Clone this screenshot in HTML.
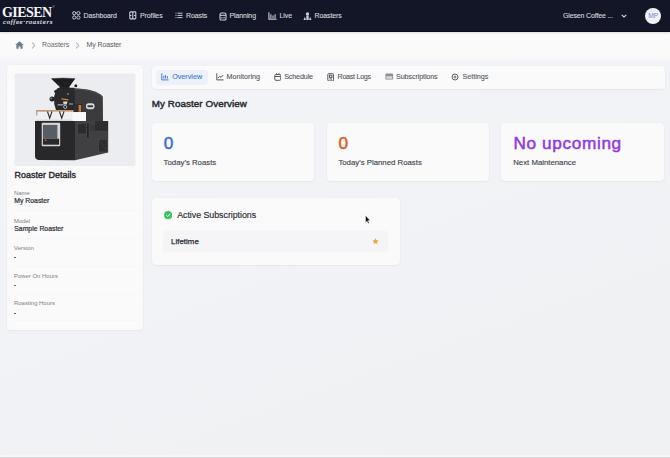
<!DOCTYPE html>
<html><head><meta charset="utf-8">
<style>
*{box-sizing:border-box;margin:0;padding:0}
html,body{width:670px;height:458px;overflow:hidden}
body{font-family:"Liberation Sans",sans-serif;background:linear-gradient(160deg,#f3f4f7 0%,#f2f3f6 45%,#eff0f2 100%);position:relative;color:#2a2d34}
.abs{position:absolute;white-space:nowrap;line-height:1}
#hdr{position:absolute;left:0;top:0;width:670px;height:32px;background:#121626;border-bottom:1px solid #0c0f19;box-shadow:0 1px 2px rgba(0,0,0,0.12);z-index:2}
.nv{position:absolute;top:11.5px;color:#d3d5dc;font-size:7px;line-height:1;white-space:nowrap;letter-spacing:-0.1px;-webkit-text-stroke:0.12px #d3d5dc}
.ic{position:absolute}
.card{position:absolute;background:#fafafb;border-radius:4px;box-shadow:0 0 2px rgba(0,0,0,0.05),0 1px 2px rgba(0,0,0,0.04)}
.lbl{position:absolute;left:14px;font-size:5.95px;color:#7d7f85;white-space:nowrap;line-height:1}
.val{position:absolute;left:14.3px;font-size:6.85px;color:#2a2d34;white-space:nowrap;line-height:1;-webkit-text-stroke:0.2px #2a2d34}
.dash{position:absolute;left:14.3px;width:2px;height:1px;background:#6a6c72}
.sep{position:absolute;left:13px;width:124px;height:1px;background:#f6f6f8}
.tab{position:absolute;top:73.3px;font-size:7.2px;color:#55575d;-webkit-text-stroke:0.1px currentColor;white-space:nowrap;line-height:1}
.stat-num{position:absolute;font-size:17.2px;white-space:nowrap;line-height:1;-webkit-text-stroke:0.5px currentColor}
.stat-lbl{position:absolute;font-size:7.8px;color:#45474e;-webkit-text-stroke:0.15px #45474e;white-space:nowrap;line-height:1}
</style></head>
<body>
<div id="hdr">
  <div class="abs" style="left:2px;top:6px;font-family:'Liberation Serif',serif;font-weight:bold;color:#f4f4f6;font-size:14px;letter-spacing:-0.55px;line-height:14px">GIESEN</div>
  <div class="abs" style="left:52.5px;top:5.5px;color:#ccc;font-size:3px">®</div>
  <div class="abs" style="left:3px;top:18.8px;font-family:'Liberation Serif',serif;font-style:italic;color:#ececf0;font-size:6.6px;letter-spacing:0.75px;line-height:6.6px;-webkit-text-stroke:0.15px #ececf0">coffee·roasters</div>

  <svg class="ic" style="left:72px;top:11px" width="9" height="9" viewBox="0 0 9 9" fill="none" stroke="#c9ccd6" stroke-width="1"><circle cx="2.2" cy="2.2" r="1.6"/><circle cx="6.4" cy="2.2" r="1.6"/><circle cx="2.2" cy="6.5" r="1.6"/><circle cx="6.4" cy="6.5" r="1.6"/></svg>
  <div class="nv" style="left:83.5px">Dashboard</div>

  <svg class="ic" style="left:129px;top:11px" width="8" height="9" viewBox="0 0 8 9" fill="none" stroke="#c9ccd6" stroke-width="1.1"><rect x="0.8" y="0.9" width="6" height="7" rx="0.6"/><line x1="3.8" y1="1" x2="3.8" y2="8"/><line x1="1" y1="4.5" x2="2.5" y2="4.5"/><line x1="5" y1="4.5" x2="6.6" y2="4.5"/></svg>
  <div class="nv" style="left:140px">Profiles</div>

  <svg class="ic" style="left:174.5px;top:12px" width="8" height="8" viewBox="0 0 8 8" fill="none" stroke="#c9ccd6" stroke-width="1"><line x1="0.5" y1="1.2" x2="1.5" y2="1.2"/><line x1="2.5" y1="1.2" x2="7.5" y2="1.2"/><line x1="0.5" y1="3.4" x2="1.5" y2="3.4"/><line x1="2.5" y1="3.4" x2="7.5" y2="3.4"/><line x1="0.5" y1="5.6" x2="1.5" y2="5.6"/><line x1="2.5" y1="5.6" x2="7.5" y2="5.6"/></svg>
  <div class="nv" style="left:186px">Roasts</div>

  <svg class="ic" style="left:218.5px;top:11.5px" width="8" height="9" viewBox="0 0 8 9" fill="none" stroke="#c9ccd6" stroke-width="1.1"><path d="M1,2.5 Q1,1 2.5,1 L5.5,1 Q7,1 7,2.5 L7,7 Q7,8 6,8 L2,8 Q1,8 1,7 Z"/><line x1="1" y1="3.3" x2="7" y2="3.3"/><line x1="2.9" y1="5" x2="2.9" y2="6.5"/><line x1="5.1" y1="5" x2="5.1" y2="6.5"/></svg>
  <div class="nv" style="left:229.5px">Planning</div>

  <svg class="ic" style="left:267.5px;top:12px" width="9" height="8" viewBox="0 0 9 8" fill="none" stroke="#c9ccd6" stroke-width="1.1"><path d="M0.9,0.3 L0.9,7.1 L8.5,7.1"/><line x1="2.9" y1="2.2" x2="2.9" y2="6"/><line x1="5" y1="3.6" x2="5" y2="6"/><line x1="7.1" y1="2.2" x2="7.1" y2="6"/></svg>
  <div class="nv" style="left:279.5px">Live</div>

  <svg class="ic" style="left:302.5px;top:11.5px" width="9" height="8.5" viewBox="0 0 9 8.5" fill="#c9ccd6"><circle cx="4.5" cy="2" r="1.7"/><rect x="3.3" y="3.6" width="2.4" height="4.6"/><path d="M0.4,8.2 L1.9,4.8 L3,8.2 Z"/><path d="M6,8.2 L7.1,4.8 L8.6,8.2 Z"/></svg>
  <div class="nv" style="left:314.5px">Roasters</div>

  <div class="nv" style="left:563px;top:12px;letter-spacing:-0.15px">Giesen Coffee ...</div>
  <svg class="ic" style="left:621px;top:13.5px" width="6" height="4" viewBox="0 0 6 4" fill="none" stroke="#d3d5dc" stroke-width="1.1"><path d="M0.7,0.8 L3,3 L5.3,0.8"/></svg>
  <div class="abs" style="left:645.3px;top:7.8px;width:16px;height:16px;border-radius:50%;background:#f0f1f9;color:#7482d4;font-size:6.6px;line-height:16.4px;text-align:center">MP</div>
</div>

<!-- breadcrumb bar -->
<div class="abs" style="left:0;top:32px;width:670px;height:30px;background:linear-gradient(180deg,#fbfbfc 0%,#fafafb 78%,#f3f4f6 100%)"></div>
<svg class="ic" style="left:14.5px;top:41px" width="9" height="8" viewBox="0 0 9 8" fill="#737c8f"><path d="M4.5,0.3 L8.8,4 L7.6,4 L7.6,7.8 L5.4,7.8 L5.4,5.4 L3.6,5.4 L3.6,7.8 L1.4,7.8 L1.4,4 L0.2,4 Z"/></svg>
<svg class="ic" style="left:30.5px;top:41.5px" width="5" height="7" viewBox="0 0 5 7" fill="none" stroke="#8a8d94" stroke-width="0.9"><path d="M1,0.6 L4,3.5 L1,6.4"/></svg>
<div class="abs" style="left:42px;top:40.7px;font-size:7px;color:#6b6e75;letter-spacing:-0.1px">Roasters</div>
<svg class="ic" style="left:75px;top:41.5px" width="5" height="7" viewBox="0 0 5 7" fill="none" stroke="#8a8d94" stroke-width="0.9"><path d="M1,0.6 L4,3.5 L1,6.4"/></svg>
<div class="abs" style="left:86.5px;top:40.7px;font-size:7px;color:#55585f;letter-spacing:-0.1px">My Roaster</div>

<!-- left card -->
<div class="card" style="left:6.5px;top:65px;width:136px;height:264.5px"></div>
<svg class="ic" style="left:14px;top:73px" width="122" height="94" viewBox="14 73 122 94">
  <rect x="14.5" y="73.5" width="121" height="92.5" rx="2.5" fill="#ecedf0"/>
  <!-- drum housing right -->
  <path d="M73,88.3 Q95,88.6 102.8,96.5 L103,121.5 L73,121.5 Z" fill="#3b3b3e"/>
  <path d="M74,89 Q94,89.4 102,96.8" fill="none" stroke="#555558" stroke-width="0.6"/>
  <!-- drum front -->
  <path d="M56,90 Q57,87.8 60,87.8 L74.5,87.8 L75,110 L56,110 Q53.5,104 54,97 Z" fill="#29292c"/>
  <circle cx="52" cy="99" r="2.5" fill="#262628"/>
  <circle cx="51.2" cy="98.3" r="0.9" fill="#8a8a8d"/>
  <circle cx="56" cy="91.5" r="1.8" fill="#262628"/>
  <circle cx="75.8" cy="85.8" r="1.5" fill="#262628"/>
  <circle cx="68" cy="94" r="1" fill="#77777a"/>
  <!-- neck + hopper -->
  <rect x="59.5" y="85" width="10" height="4" fill="#232325"/>
  <path d="M51,78.6 Q63,77.2 75.3,78.6 L69.8,86.2 L59,86.2 Z" fill="#1e1e20"/>
  <path d="M51.5,78.6 Q63,77.6 75,78.6" fill="none" stroke="#4a4a4c" stroke-width="0.5"/>
  <!-- orange accent diag -->
  <path d="M61.5,98.2 L68.5,99.2 L68.3,100.6 L61.3,99.6 Z" fill="#c9803c"/>
  <!-- silver mechanism -->
  <rect x="57.5" y="104" width="6" height="1.6" fill="#8e8e91"/>
  <path d="M63,101.5 L67.5,101.5 L66.8,104.5 L63.7,104.5 Z" fill="#d5d5d7"/>
  <circle cx="65.2" cy="107" r="1.6" fill="none" stroke="#c9c9cc" stroke-width="0.8"/>
  <rect x="69" y="103" width="4" height="2" fill="#6d6d70"/>
  <!-- orange label box -->
  <rect x="74" y="104" width="8" height="8.5" fill="#2e2e31"/>
  <rect x="78.6" y="105" width="2.5" height="6.8" fill="#c97d36"/>
  <!-- badge -->
  <rect x="86" y="103.2" width="8.5" height="6" rx="2.6" fill="#dcdcde"/>
  <rect x="87.4" y="105.2" width="5.7" height="2" rx="0.6" fill="#3a3a3c"/>
  <!-- cooling tray / white plate -->
  <path d="M35.5,112 L86,112 L86,121 L35.5,121 Z" fill="#efeff1"/>
  <rect x="72.5" y="112.5" width="13.5" height="8.5" fill="#f9f9fa"/>
  <rect x="36" y="110.2" width="38" height="1.3" fill="#b98152"/>
  <rect x="36.2" y="111" width="1.1" height="4.5" fill="#9a9a9d"/>
  <path d="M47.5,111.5 L49.7,118.2 L52,111.5" fill="none" stroke="#2c2c2e" stroke-width="1.1"/>
  <path d="M59.5,111.5 L61.7,118.2 L64,111.5" fill="none" stroke="#2c2c2e" stroke-width="1.1"/>
  <rect x="36" y="119.6" width="36.5" height="1.5" fill="#d8d8da"/>
  <!-- cabinet front -->
  <path d="M35,121 L75,121 L75,160.3 L38.5,160 Q35,159.6 35,156 Z" fill="#28282a"/>
  <!-- cabinet side -->
  <path d="M75,121 L108.2,121 L108.2,152.5 L75,160.3 Z" fill="#404043"/>
  <rect x="95" y="121.2" width="13" height="9.5" fill="#2d2d30"/>
  <rect x="77.5" y="123.5" width="9" height="10.5" fill="#2c2c2f" stroke="#505053" stroke-width="0.5"/>
  <rect x="87" y="123.5" width="1.6" height="14" fill="#242426"/>
  <rect x="90" y="125" width="5" height="6" fill="#38383b"/>
  <!-- side vent -->
  <rect x="98.5" y="139.2" width="9" height="12.8" fill="#2b2b2e" stroke="#505053" stroke-width="0.6"/>
  <path d="M100,141 L106,150" stroke="#48484b" stroke-width="0.6"/>
  <!-- screen -->
  <rect x="41.7" y="122.7" width="18.5" height="23.5" rx="1" fill="#d4d5d7"/>
  <rect x="42.9" y="124.9" width="14.5" height="13.8" fill="#585c64"/>
  <rect x="42.9" y="138.7" width="16.2" height="6" fill="#2a2a2d"/>
  <circle cx="45.6" cy="140.2" r="0.8" fill="#c97d36"/>
  <circle cx="56.5" cy="131" r="0.6" fill="#77777a"/>
</svg>
<div class="abs" style="left:14.5px;top:170.5px;font-size:8.9px;color:#2a2c31;-webkit-text-stroke:0.4px #2a2c31;letter-spacing:0.05px">Roaster Details</div>

<div class="lbl" style="top:190.5px">Name</div>
<div class="val" style="top:198.4px">My Roaster</div>
<div class="sep" style="top:210px"></div>
<div class="lbl" style="top:218.5px">Model</div>
<div class="val" style="top:226px">Sample Roaster</div>
<div class="sep" style="top:237.5px"></div>
<div class="lbl" style="top:245.5px">Version</div>
<div class="dash" style="top:257px"></div>
<div class="sep" style="top:266px"></div>
<div class="lbl" style="top:273.5px">Power On Hours</div>
<div class="dash" style="top:285px"></div>
<div class="sep" style="top:294px"></div>
<div class="lbl" style="top:301px">Roasting Hours</div>
<div class="dash" style="top:312.5px"></div>
<div class="sep" style="top:320px"></div>

<!-- tabs -->
<div class="card" style="left:152px;top:65.5px;width:512.5px;height:23px"></div>
<div class="abs" style="left:155.5px;top:70px;width:52.5px;height:14.5px;background:#edf1fa;border-radius:4px"></div>
<svg class="ic" style="left:161px;top:73px" width="8" height="7.5" viewBox="0 0 8 7.5" fill="none" stroke="#4a78d6" stroke-width="1"><path d="M0.8,0.3 L0.8,6.9 L7.6,6.9"/><line x1="2.8" y1="2.8" x2="2.8" y2="5.5"/><line x1="4.6" y1="2" x2="4.6" y2="5.5"/><line x1="6.4" y1="3.2" x2="6.4" y2="5.5"/></svg>
<div class="tab" style="left:172.2px;color:#4174d5">Overview</div>
<svg class="ic" style="left:215.5px;top:73px" width="8" height="7.5" viewBox="0 0 8 7.5" fill="none" stroke="#55575d" stroke-width="1"><path d="M0.8,0.3 L0.8,6.9 L7.6,6.9"/><path d="M2,5.2 L3.8,3.3 L5,4.4 L7.2,2"/></svg>
<div class="tab" style="left:226.5px">Monitoring</div>
<svg class="ic" style="left:273.5px;top:72.5px" width="7.5" height="8" viewBox="0 0 7.5 8" fill="none" stroke="#55575d" stroke-width="1"><rect x="0.8" y="1.5" width="6" height="5.8" rx="1"/><line x1="0.8" y1="3.5" x2="6.8" y2="3.5"/><line x1="2.5" y1="0.3" x2="2.5" y2="2"/><line x1="5" y1="0.3" x2="5" y2="2"/></svg>
<div class="tab" style="left:284.2px;letter-spacing:-0.15px">Schedule</div>
<svg class="ic" style="left:326.5px;top:72.5px" width="7.5" height="8.5" viewBox="0 0 7.5 8.5" fill="none" stroke="#55575d" stroke-width="1"><rect x="0.8" y="0.7" width="5.8" height="7.2" rx="0.8"/><rect x="2.5" y="2.2" width="2.5" height="2.2"/><line x1="2.5" y1="6" x2="5" y2="6"/></svg>
<div class="tab" style="left:337.5px;letter-spacing:-0.3px">Roast Logs</div>
<svg class="ic" style="left:385px;top:73px" width="8.5" height="7" viewBox="0 0 8.5 7"><rect x="0.4" y="0.5" width="7.7" height="6.1" rx="1.2" fill="#8c8e94"/><rect x="1.3" y="3.2" width="5.9" height="2.5" rx="0.4" fill="#d8d9dc"/></svg>
<div class="tab" style="left:396px;letter-spacing:-0.12px">Subscriptions</div>
<svg class="ic" style="left:451px;top:72.5px" width="8" height="8" viewBox="0 0 8 8" fill="none" stroke="#606268"><circle cx="4" cy="4" r="3" stroke-width="1"/><circle cx="4" cy="4" r="1" stroke-width="0.9"/></svg>
<div class="tab" style="left:462.4px">Settings</div>

<div class="abs" style="left:151.8px;top:99px;font-size:9.8px;color:#2a2c31;-webkit-text-stroke:0.45px #2a2c31;letter-spacing:0.08px">My Roaster Overview</div>

<!-- stat cards -->
<div class="card" style="left:151.7px;top:122.5px;width:162.5px;height:58.7px"></div>
<div class="card" style="left:326.7px;top:122.7px;width:162.5px;height:58.5px"></div>
<div class="card" style="left:501.3px;top:122.9px;width:162.5px;height:58px"></div>
<div class="stat-num" style="left:163.8px;top:135px;color:#386ddf">0</div>
<div class="stat-lbl" style="left:163.6px;top:159px">Today's Roasts</div>
<div class="stat-num" style="left:338.6px;top:135px;color:#df5b20">0</div>
<div class="stat-lbl" style="left:338.4px;top:159px">Today's Planned Roasts</div>
<div class="stat-num" style="left:513.4px;top:134.5px;color:#9038e4;letter-spacing:0.65px">No upcoming</div>
<div class="stat-lbl" style="left:513.2px;top:159px">Next Maintenance</div>

<!-- subscriptions -->
<div class="card" style="left:152px;top:198.3px;width:248px;height:66.3px"></div>
<svg class="ic" style="left:164px;top:211.3px" width="8.4" height="8.4" viewBox="0 0 8.4 8.4"><circle cx="4.2" cy="4.2" r="4.1" fill="#3ec25f"/><path d="M2.3,4.3 L3.7,5.6 L6.1,2.9" fill="none" stroke="#fff" stroke-width="1"/></svg>
<div class="abs" style="left:177.2px;top:211px;font-size:8.9px;color:#2a2c31;-webkit-text-stroke:0.15px #2a2c31;letter-spacing:-0.05px">Active Subscriptions</div>
<div class="abs" style="left:162.5px;top:230.8px;width:225px;height:21px;background:#f5f5f7;border-radius:3px;box-shadow:0 0 2px rgba(0,0,0,0.03)"></div>
<div class="abs" style="left:171.1px;top:237.7px;font-size:7.8px;color:#26282d;-webkit-text-stroke:0.25px #26282d;letter-spacing:0.05px">Lifetime</div>
<svg class="ic" style="left:372.2px;top:238.2px" width="7" height="6.6" viewBox="0 0 24 23"><path d="M12,0.8 L15.3,7.6 L22.8,8.6 L17.3,13.8 L18.7,21.2 L12,17.6 L5.3,21.2 L6.7,13.8 L1.2,8.6 L8.7,7.6 Z" fill="#e3a93a"/></svg>
<div class="abs" style="left:0;top:455px;width:670px;height:2px;background:#f6f6f8"></div>
<div class="abs" style="left:0;top:457px;width:670px;height:1px;background:#dadadc"></div>
<!-- cursor -->
<svg class="ic" style="left:364.5px;top:215px" width="6" height="9" viewBox="0 0 6 9"><path d="M0.5,0.5 L0.5,7.5 L2,6 L3.2,8.5 L4.2,8 L3.1,5.6 L5.2,5.6 Z" fill="#111" stroke="#fff" stroke-width="0.4"/></svg>
</body></html>
